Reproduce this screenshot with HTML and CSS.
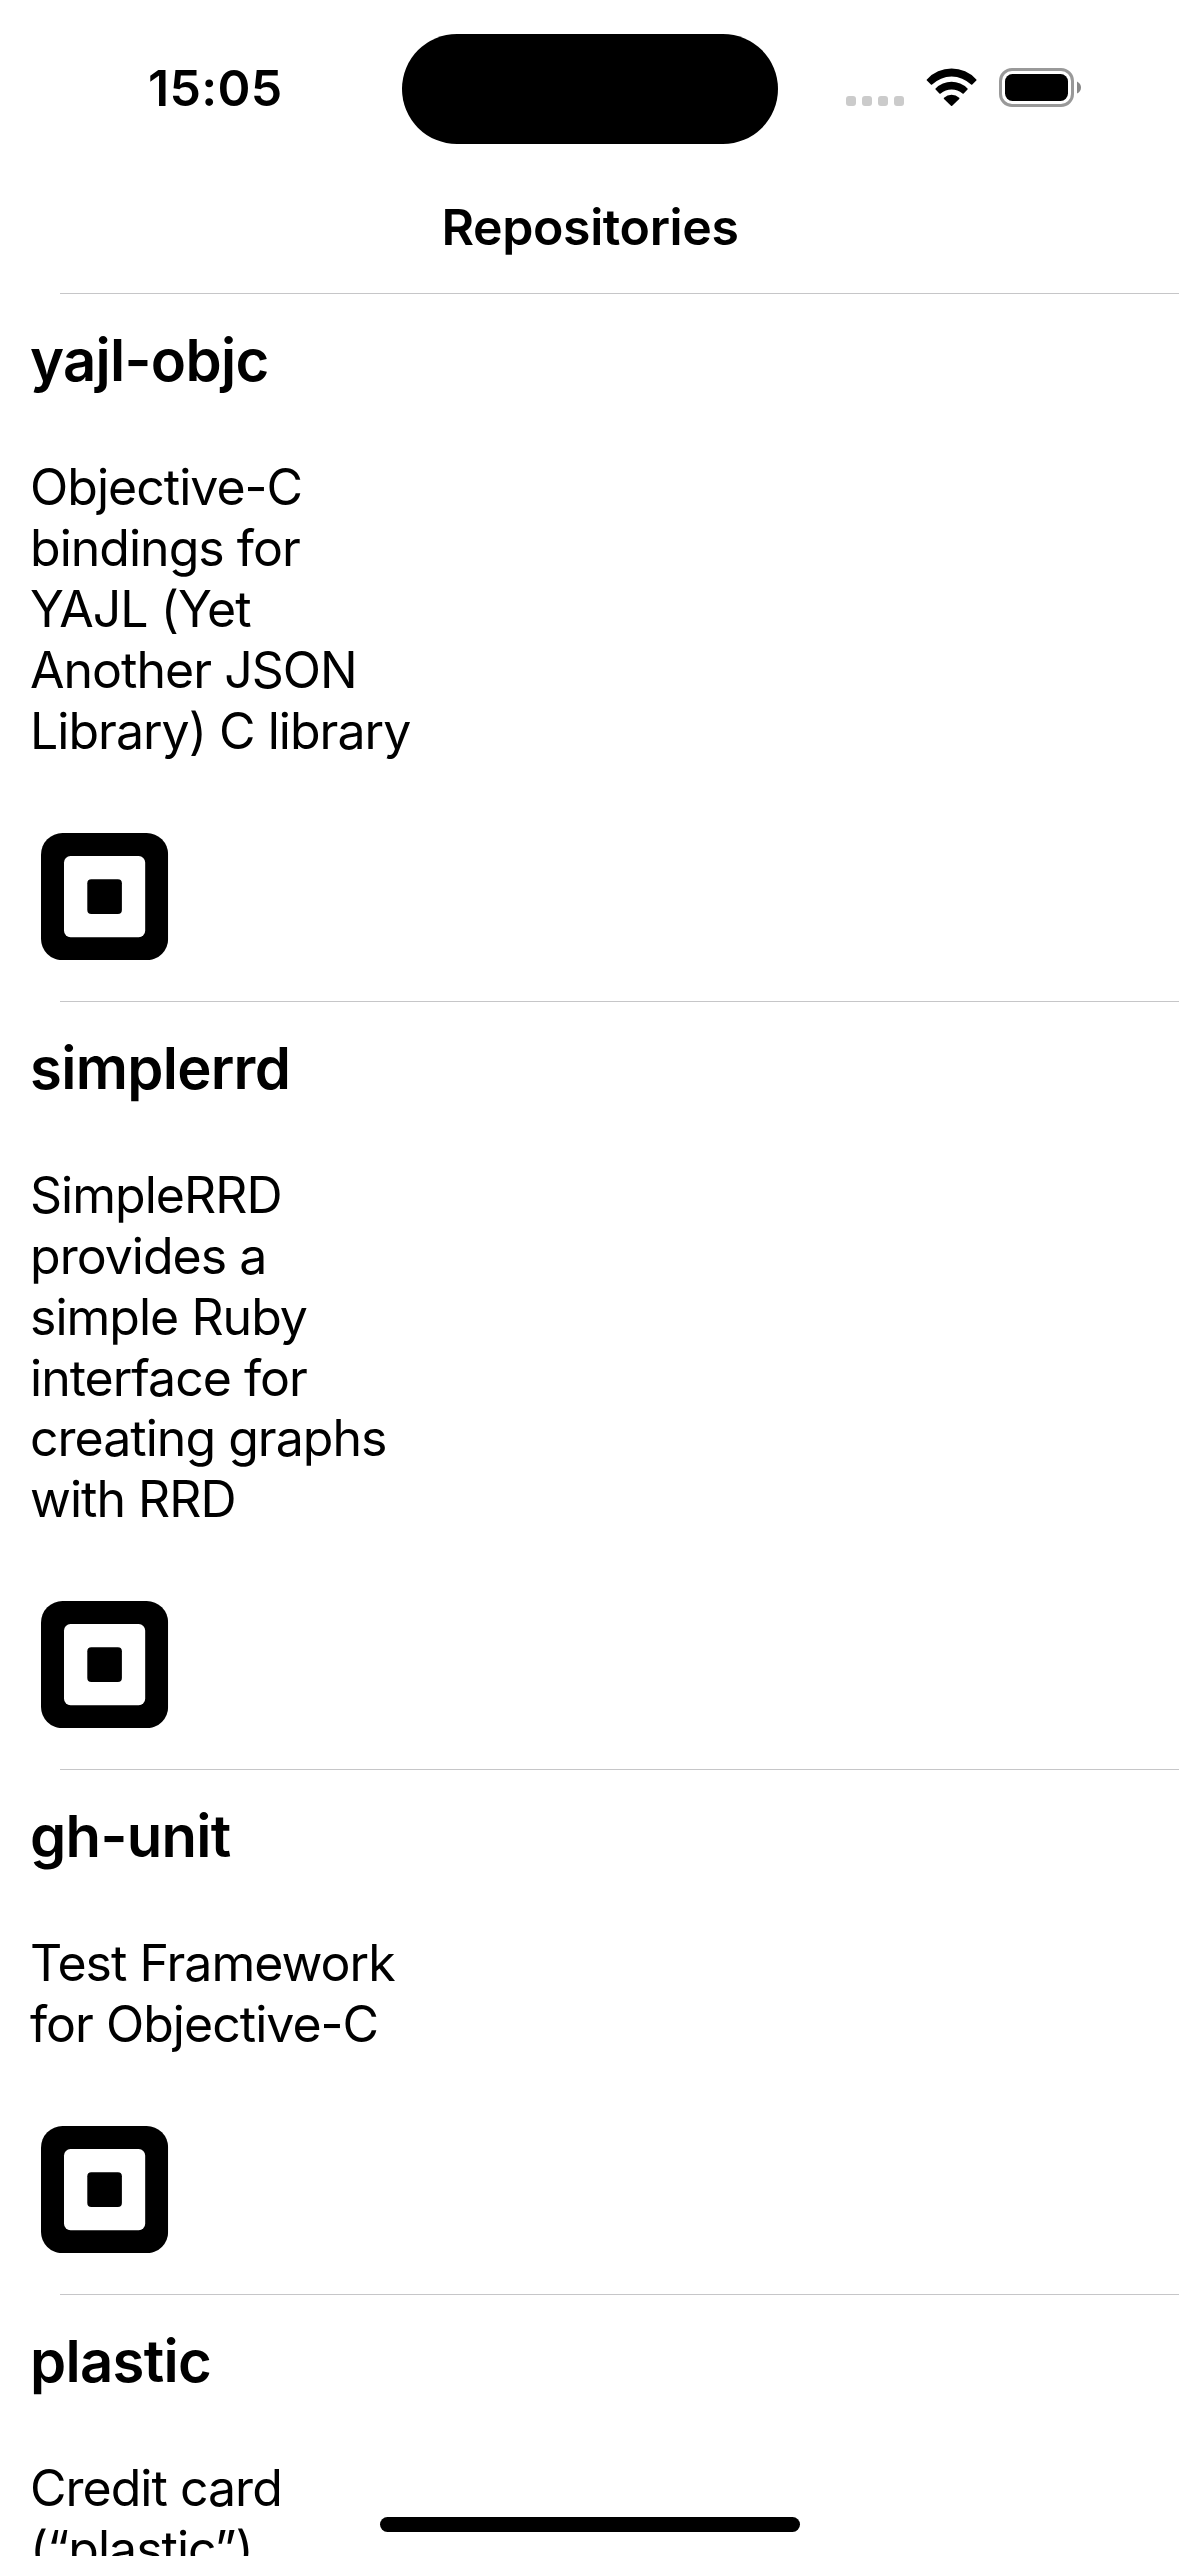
FILE: index.html
```html
<!DOCTYPE html>
<html lang="en">
<head>
<meta charset="utf-8">
<title>Repositories</title>
<link rel="stylesheet" href="styles.css">
</head>
<body>
<svg width="0" height="0" class="sprite" aria-hidden="true">
  <symbol id="avatar" viewBox="0 0 127.200 127.200">
    <rect width="127.200" height="127.200" rx="21.500"/>
    <rect x="23" y="23" width="81.200" height="81.200" rx="6.500" fill="#fff"/>
    <rect x="46.300" y="46.300" width="34.600" height="34.600" rx="4"/>
  </symbol>
</svg>
<div class="screen">
  <header class="status">
    <div class="time">15:05</div>
    <div class="island"></div>
    <div class="indicators">
      <svg width="58" height="39" viewBox="0 0 58 39" fill="#cbcbcb"><rect x="0" y="28" width="10" height="10" rx="3"/><rect x="16" y="28" width="10" height="10" rx="3"/><rect x="32" y="28" width="10" height="10" rx="3"/><rect x="48" y="28" width="10" height="10" rx="3"/></svg>
      <svg width="51" height="39" viewBox="0 0 51 39"><path d="M.9 12.400Q.3 12 .9 11.400A33.500 33.500 0 0 1 50.300 11.400Q50.900 12 50.300 12.600L46.300 16.500Q45.700 17 45.100 16.500A28 28 0 0 0 6.100 16.500Q5.400 17 4.900 16.500Z"/><path d="M9.600 21.600Q9 21 9.600 20.400A22.500 22.500 0 0 1 41.500 20.400Q42.100 21 41.500 21.600L37.700 25.400Q37.200 25.900 36.500 25.400A17.500 17.500 0 0 0 14.700 25.400Q14 25.900 13.400 25.400Z"/><path d="M18 31Q17.400 30.300 18 29.700A11.500 11.500 0 0 1 33.200 29.700Q33.800 30.300 33.200 31L26.200 37.700Q25.600 38.200 25 37.700Z"/></svg>
      <svg width="82" height="39" viewBox="0 0 82 39"><rect x="1.500" y="1.500" width="72" height="36" rx="11.500" fill="none" stroke="#999" stroke-width="3"/><rect x="6" y="6" width="63" height="27" rx="7.500"/><path d="M78 13.500Q82 15.500 82 19.500T78 25.500Z" fill="#888"/></svg>
    </div>
  </header>
  <h1 class="title">Repositories</h1>
  <main class="list">
    <article class="repo">
      <h2 class="name">yajl-objc</h2>
      <p class="desc">Objective-C<br>bindings for<br>YAJL (Yet<br>Another JSON<br>Library) C library</p>
      <svg class="avatar"><use href="#avatar"/></svg>
    </article>
    <article class="repo">
      <h2 class="name">simplerrd</h2>
      <p class="desc">SimpleRRD<br>provides a<br>simple Ruby<br>interface for<br>creating graphs<br>with RRD</p>
      <svg class="avatar"><use href="#avatar"/></svg>
    </article>
    <article class="repo">
      <h2 class="name">gh-unit</h2>
      <p class="desc">Test Framework<br>for Objective-C</p>
      <svg class="avatar"><use href="#avatar"/></svg>
    </article>
    <article class="repo">
      <h2 class="name">plastic</h2>
      <p class="desc">Credit card<br>(“plastic”)</p>
    </article>
  </main>
  <div class="home-indicator"></div>
</div>
</body>
</html>
```
FILE: styles.css
```css
body {
  margin: 0;
  background: #fff;
  color: #000;
  font-family: Inter, "Liberation Sans", sans-serif;
}

.sprite { position: absolute; }

.screen {
  position: relative;
  display: flex;
  flex-direction: column;
  width: 1179px;
  height: 2556px;
  overflow: hidden;
}

.status {
  box-sizing: border-box;
  flex: none;
  display: grid;
  grid-template-columns: 1fr 376px 1fr;
  height: 177px;
  padding-top: 33px;
}

.time {
  padding-left: 148px;
  font-size: 50px;
  font-weight: 600;
  line-height: 110px;
  letter-spacing: 0.3px;
}

.island {
  height: 110px;
  margin-top: 1px;
  border-radius: 55px;
  background: #000;
}

.indicators {
  display: flex;
  justify-content: flex-end;
  gap: 22px;
  padding: 35px 98px 0 0;
}

.title {
  flex: none;
  height: 116px;
  margin: 0;
  padding-left: 1px;
  text-align: center;
  font-size: 50px;
  font-weight: 600;
  line-height: 100px;
  letter-spacing: -0.4px;
}

.list { flex: none; }

.repo {
  display: flex;
  flex-direction: column;
  padding: 0 0 40.5px 30px;
}

.repo::before {
  content: "";
  height: 1px;
  margin: 0 0 30.4px 30px;
  background: #c6c6c8;
}

.name {
  margin: 0 0 61px;
  font-size: 58px;
  font-weight: 640;
  line-height: 72px;
  letter-spacing: -0.7px;
}

.desc {
  margin: 0 0 71.1px;
  font-size: 50px;
  font-weight: 400;
  line-height: 60.88px;
  letter-spacing: -0.98px;
  white-space: nowrap;
}

.avatar {
  width: 127.2px;
  height: 127.2px;
  margin-left: 11.4px;
}

.home-indicator {
  position: absolute;
  left: 380px;
  bottom: 24px;
  width: 420px;
  height: 15px;
  border-radius: 8px;
  background: #000;
}
```
